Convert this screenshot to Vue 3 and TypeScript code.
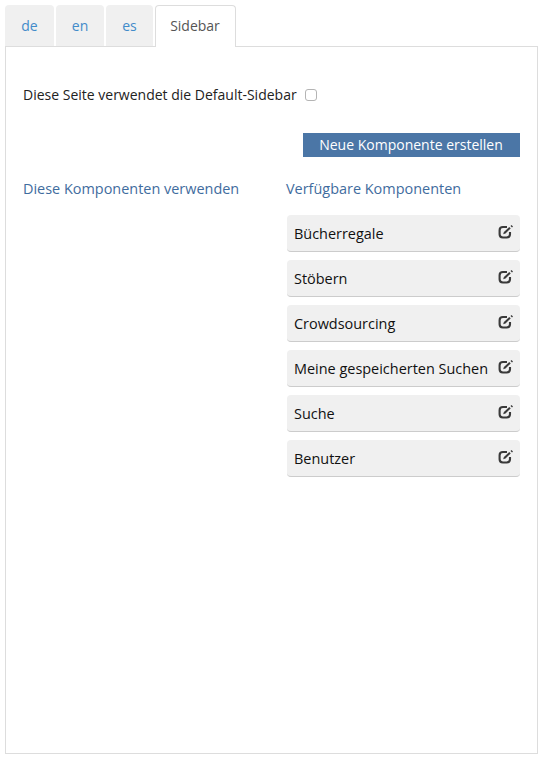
<script setup lang="ts">
import { ref } from 'vue'

const tabs = ['de', 'en', 'es', 'Sidebar']
const activeTab = ref('Sidebar')
const useDefault = ref(false)
const available: string[] = [
  'Bücherregale',
  'Stöbern',
  'Crowdsourcing',
  'Meine gespeicherten Suchen',
  'Suche',
  'Benutzer',
]
</script>

<template>
  <main class="page">
    <nav class="tabs">
      <a
        v-for="tab in tabs"
        :key="tab"
        class="tab"
        :class="['tab-' + tab.toLowerCase(), { active: tab === activeTab }]"
        @click="activeTab = tab"
      >{{ tab }}</a>
    </nav>
    <section class="panel">
      <label class="default-row">
        <span>Diese Seite verwendet die Default-Sidebar</span>
        <input v-model="useDefault" class="check" type="checkbox" />
      </label>
      <div class="actions">
        <button class="create" type="button">Neue Komponente erstellen</button>
      </div>
      <div class="columns">
        <div>
          <h2 class="heading">Diese Komponenten verwenden</h2>
        </div>
        <div>
          <h2 class="heading heading-available">Verfügbare Komponenten</h2>
          <ul class="list">
            <li v-for="item in available" :key="item" class="item">
              <span>{{ item }}</span>
              <svg class="edit" width="15" height="14" viewBox="0 0 15 14">
                <path
                  d="M9 2H4.9Q1.6 2 1.6 5.2V9.3Q1.6 12.5 4.9 12.5H8.7Q12 12.5 12 9.3V7"
                  fill="none"
                  stroke="#3a3a3a"
                  stroke-width="2.1"
                />
                <path d="M5.2 9.2L5.9 7L11.3 2L12.7 3.4L7.5 8.4Z" fill="#3a3a3a" />
                <path d="M12.5 1.1L13.5 .1L15 1.5L14 2.5Z" fill="#3a3a3a" />
              </svg>
            </li>
          </ul>
        </div>
      </div>
    </section>
  </main>
</template>

<style>
body {
  background: #fff;
}
</style>

<style scoped>
.page {
  box-sizing: border-box;
  width: 544px;
  height: 760px;
  padding: 5px 6px 6px 5px;
  display: flex;
  flex-direction: column;
  font-family: 'Open Sans', sans-serif;
  font-size: 14px;
  line-height: 20px;
  color: #222;
}
.tabs {
  display: flex;
  gap: 2px;
  height: 41px;
}
.tab {
  box-sizing: border-box;
  height: 41px;
  padding-top: 11px;
  text-align: center;
  background: #f0f0f0;
  border-radius: 4px 4px 0 0;
  color: #428bca;
  cursor: pointer;
}
.tab-de {
  width: 49px;
}
.tab-en {
  width: 48px;
}
.tab-es {
  width: 47px;
}
.tab-sidebar {
  width: 81px;
}
.active {
  height: 42px;
  padding: 10px 1px 0 0;
  border: 1px solid #ddd;
  border-bottom: 0;
  background: #fff;
  color: #555;
  z-index: 1;
}
.panel {
  box-sizing: border-box;
  flex: 1;
  border: 1px solid #ddd;
  padding: 38px 17px 0;
}
.default-row {
  display: flex;
  align-items: center;
  height: 20px;
}
.check {
  appearance: none;
  box-sizing: border-box;
  width: 12px;
  height: 12px;
  margin: 0 0 0 8px;
  border: 1px solid #b4b4b4;
  border-radius: 3px;
  background: #fff;
}
.check:checked {
  background: #4b76a6;
}
.actions {
  display: flex;
  justify-content: flex-end;
  margin-top: 28px;
}
.create {
  width: 217px;
  height: 24px;
  padding: 0 1px 0 0;
  border: 0;
  background: #4b76a6;
  color: #fff;
  font: inherit;
  white-space: nowrap;
}
.columns {
  display: grid;
  grid-template-columns: 264px 233px;
  margin-top: 22px;
}
.heading {
  margin: 0;
  font-size: 14.45px;
  font-weight: 400;
  line-height: 20px;
  color: #3f6c9e;
}
.heading-available {
  margin-left: -1px;
}
.list {
  list-style: none;
  margin: 16px 0 0;
  padding: 0;
  display: flex;
  flex-direction: column;
  gap: 8px;
}
.item {
  box-sizing: border-box;
  display: flex;
  align-items: center;
  justify-content: space-between;
  height: 37px;
  padding: 1px 7px 0;
  border-bottom: 1px solid #ccc;
  border-radius: 4px;
  background: #f0f0f0;
  color: #111;
  font-size: 14.45px;
  white-space: nowrap;
}
.edit {
  margin-bottom: 3px;
}
</style>
